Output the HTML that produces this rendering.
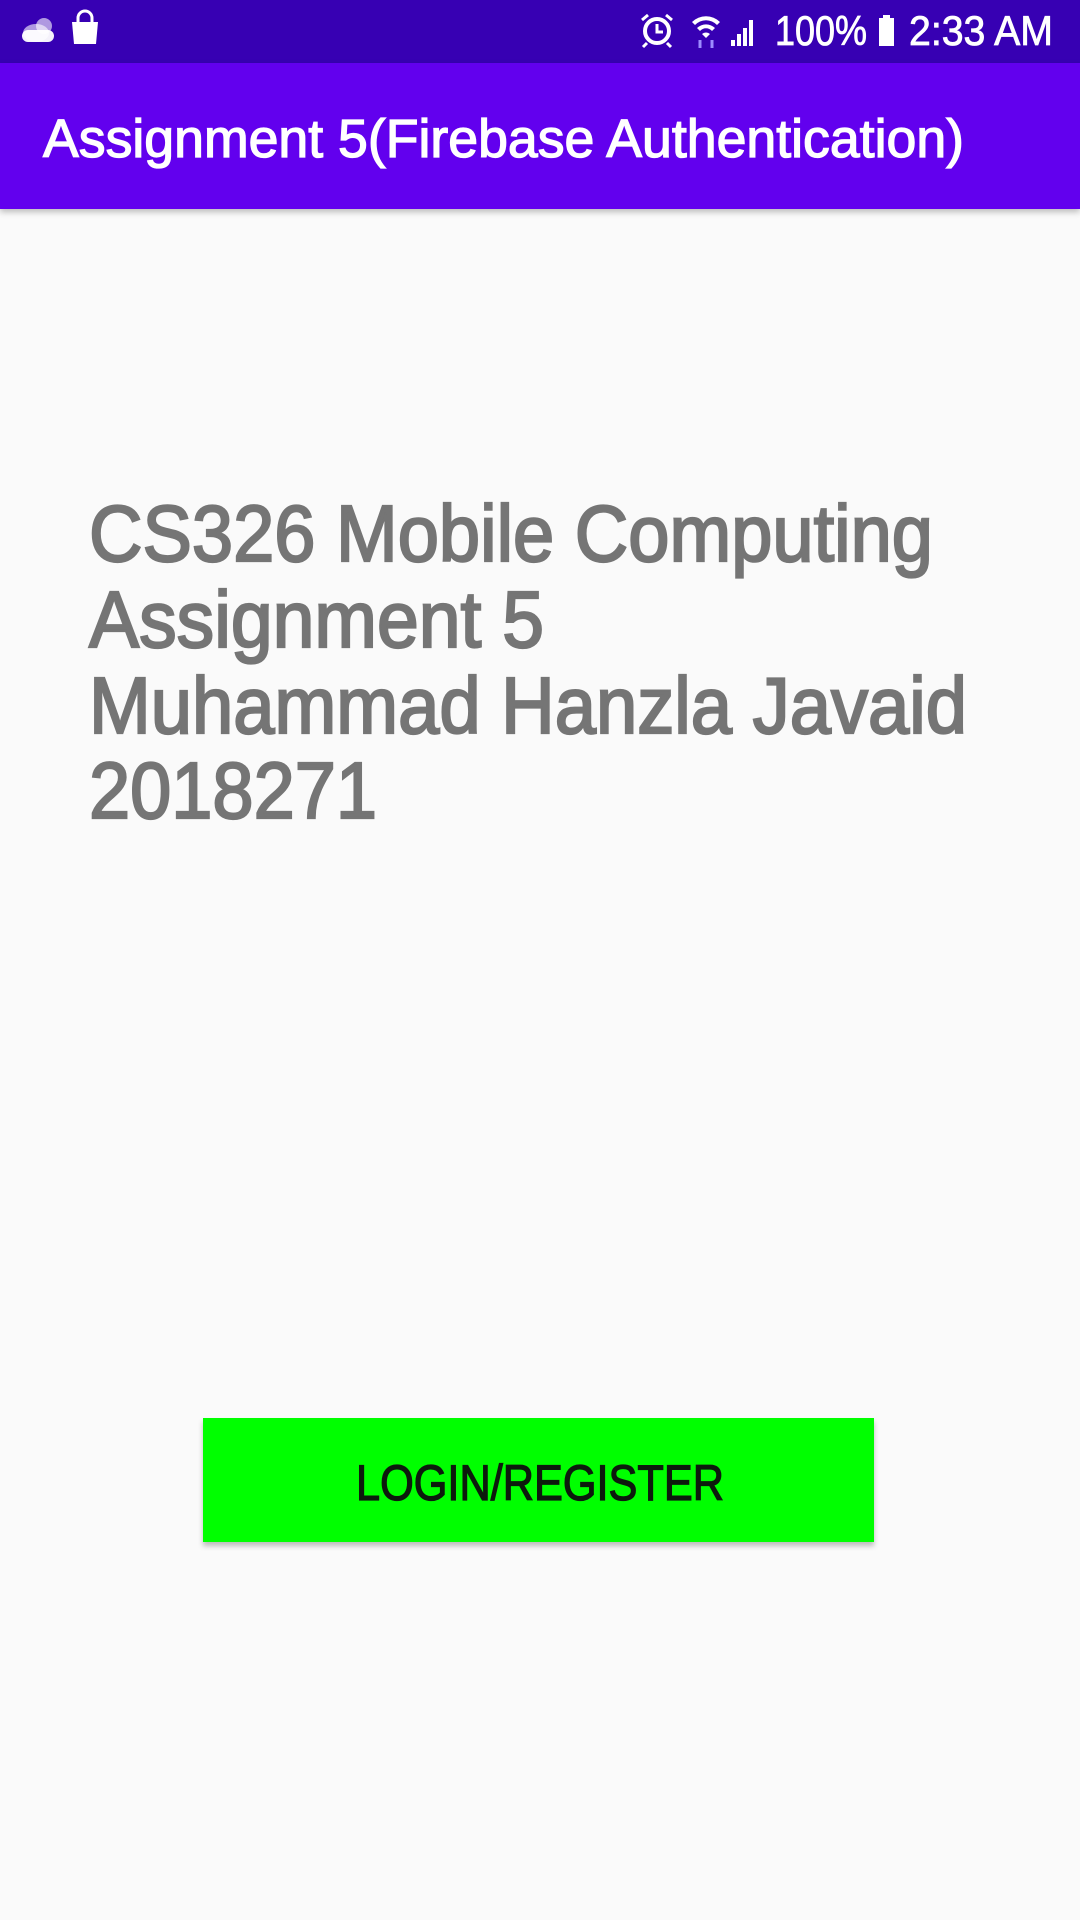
<!DOCTYPE html>
<html><head><meta charset="utf-8"><style>
html,body{margin:0;padding:0;width:1080px;height:1920px;background:#FAFAFA;overflow:hidden;font-family:"Liberation Sans",sans-serif}
#sb{position:absolute;left:0;top:0;width:1080px;height:63px;background:#3700B3}
#tb{position:absolute;left:0;top:63px;width:1080px;height:146px;background:#6200EE;box-shadow:0 3px 6px rgba(0,0,0,0.25)}
#btn{position:absolute;left:203px;top:1418px;width:671px;height:124px;background:#00FF00;box-shadow:0 4px 5px rgba(0,0,0,0.25)}
svg{position:absolute;left:0;top:0}
</style></head><body>
<div id="sb"></div><div id="tb"></div><div id="btn"></div>
<svg width="1080" height="1920" viewBox="0 0 1080 1920">
 <g fill="#fff">
  <ellipse cx="36" cy="33" rx="13" ry="9" opacity="0.6"/>
  <circle cx="44" cy="26" r="8" opacity="0.6"/>
  <rect x="22" y="30" width="32" height="12" rx="6" opacity="0.95"/>
  <path d="M72 22 h26 l-2 22 h-22 z"/>
  <path d="M78 22 v-4 a7 7 0 0 1 14 0 v4" fill="none" stroke="#fff" stroke-width="3"/>
  <circle cx="657" cy="31" r="12" fill="none" stroke="#fff" stroke-width="4"/>
  <path d="M657 24 v8 h6" fill="none" stroke="#fff" stroke-width="3"/>
  <path d="M642 20 l6 -5 M672 20 l-6 -5 M647 43 l-4 4 M667 43 l4 4" stroke="#fff" stroke-width="3"/>
  <path d="M692 22 a20 20 0 0 1 28 0 l-3 3 a15 15 0 0 0 -22 0 z M697 28 a13 13 0 0 1 18 0 l-3 3 a8 8 0 0 0 -12 0 z M702 34 a6 6 0 0 1 8 0 l-4 4 z"/>
  <path d="M700 40 v8 M712 40 v8" stroke="#9c8cff" stroke-width="3"/>
  <path d="M731 46 h4 v-6 h-4z M737 46 h4 v-12 h-4z M743 46 h4 v-18 h-4z M749 46 h4 v-26 h-4z"/>
  <rect x="879" y="18" width="15" height="28"/><rect x="883" y="15" width="7" height="4"/>
 </g>
 <text x="775" y="45" font-size="42" fill="#fff" stroke="#fff" stroke-width="0.8" textLength="92" lengthAdjust="spacingAndGlyphs">100%</text>
 <text x="909" y="45" font-size="42" fill="#fff" stroke="#fff" stroke-width="0.8" textLength="144" lengthAdjust="spacingAndGlyphs">2:33 AM</text>
 <text x="43" y="157" font-size="54" fill="#fff" stroke="#fff" stroke-width="1.3" textLength="921" lengthAdjust="spacingAndGlyphs">Assignment 5(Firebase Authentication)</text>
 <g fill="#757575" stroke="#757575" stroke-width="2.2" font-size="80">
  <text x="89" y="561" textLength="844" lengthAdjust="spacingAndGlyphs">CS326 Mobile Computing</text>
  <text x="89" y="647" textLength="455" lengthAdjust="spacingAndGlyphs">Assignment 5</text>
  <text x="89" y="733" textLength="878" lengthAdjust="spacingAndGlyphs">Muhammad Hanzla Javaid</text>
  <text x="89" y="818" textLength="288" lengthAdjust="spacingAndGlyphs">2018271</text>
 </g>
 <text x="356" y="1500" font-size="50" fill="#0d1a0d" stroke="#0d1a0d" stroke-width="1.3" textLength="368" lengthAdjust="spacingAndGlyphs">LOGIN/REGISTER</text>
</svg>
</body></html>
